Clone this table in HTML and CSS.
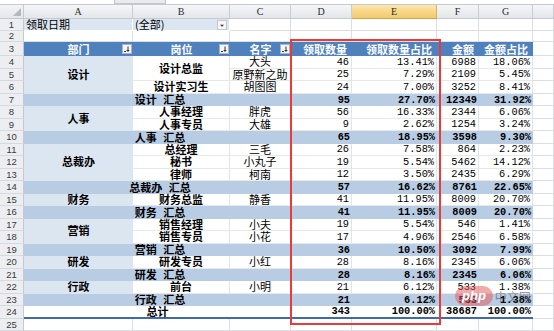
FILE: index.html
```html
<!DOCTYPE html>
<html lang="zh-CN">
<head>
<meta charset="utf-8">
<title>数据透视表</title>
<link rel="stylesheet" href="styles.css">
</head>
<body>
<div class="screen">
  <div class="topbar"><div class="seg"></div></div>
  <div class="sheet">
    <div class="corner"><svg width="8" height="8" viewBox="0 0 8 8"><polygon points="8,0 8,8 0,8" fill="#b4b8be"/></svg></div>
    <div class="ch">A</div><div class="ch">B</div><div class="ch">C</div><div class="ch">D</div><div class="ch sel">E</div><div class="ch">F</div><div class="ch">G</div><div class="ch"></div>

    <div class="rh">1</div>
    <div class="c flt">领取日期</div>
    <div class="c flt">(全部)<span class="dd"><svg width="10" height="10" viewBox="0 0 10 10"><polygon points="2.5,4 7.5,4 5,6.5" fill="#333"/></svg></span></div>
    <div class="c"></div><div class="c"></div><div class="c"></div><div class="c"></div><div class="c"></div><div class="c"></div>

    <div class="rh">2</div>
    <div class="c"></div><div class="c"></div><div class="c"></div><div class="c"></div><div class="c"></div><div class="c"></div><div class="c"></div><div class="c"></div>

    <div class="rh">3</div>
    <div class="h ctr">部门<span class="fb"><svg width="10" height="10" viewBox="0 0 10 10"><rect x="0.5" y="0.5" width="9" height="9" fill="#f4f5f7" stroke="#a9b3c2"/><path d="M6 2.5V7" stroke="#333" stroke-width="1"/><polygon points="4.2,6 7.8,6 6,8" fill="#333"/><path d="M2 7.5H4" stroke="#333" stroke-width="1"/></svg></span></div>
    <div class="h ctr">岗位<span class="fb"><svg width="10" height="10" viewBox="0 0 10 10"><rect x="0.5" y="0.5" width="9" height="9" fill="#f4f5f7" stroke="#a9b3c2"/><path d="M6 2.5V7" stroke="#333" stroke-width="1"/><polygon points="4.2,6 7.8,6 6,8" fill="#333"/><path d="M2 7.5H4" stroke="#333" stroke-width="1"/></svg></span></div>
    <div class="h ctr">名字<span class="fb"><svg width="10" height="10" viewBox="0 0 10 10"><rect x="0.5" y="0.5" width="9" height="9" fill="#f4f5f7" stroke="#a9b3c2"/><path d="M6 2.5V7" stroke="#333" stroke-width="1"/><polygon points="4.2,6 7.8,6 6,8" fill="#333"/><path d="M2 7.5H4" stroke="#333" stroke-width="1"/></svg></span></div>
    <div class="h hr">领取数量</div>
    <div class="h hr">领取数量占比</div>
    <div class="h hr">金额</div>
    <div class="h hr">金额占比</div>
    <div class="c"></div>

    <div class="rh">4</div>
    <div class="dept r3">设计</div>
    <div class="d pos r2">设计总监</div>
    <div class="d ctr">大头</div>
    <div class="d num">46</div><div class="d num">13.41%</div><div class="d num">6988</div><div class="d num">18.06%</div><div class="c"></div>

    <div class="rh">5</div>
    <div class="d ctr">原野新之助</div>
    <div class="d num">25</div><div class="d num">7.29%</div><div class="d num">2109</div><div class="d num">5.45%</div><div class="c"></div>

    <div class="rh">6</div>
    <div class="d pos">设计实习生</div>
    <div class="d ctr">胡图图</div>
    <div class="d num">24</div><div class="d num">7.00%</div><div class="d num">3252</div><div class="d num">8.41%</div><div class="c"></div>

    <div class="rh">7</div>
    <div class="s lbl">设计 汇总</div>
    <div class="s num">95</div><div class="s num">27.70%</div><div class="s num">12349</div><div class="s num">31.92%</div><div class="c"></div>

    <div class="rh">8</div>
    <div class="dept r2">人事</div>
    <div class="d pos">人事经理</div>
    <div class="d ctr">胖虎</div>
    <div class="d num">56</div><div class="d num">16.33%</div><div class="d num">2344</div><div class="d num">6.06%</div><div class="c"></div>

    <div class="rh">9</div>
    <div class="d pos">人事专员</div>
    <div class="d ctr">大雄</div>
    <div class="d num">9</div><div class="d num">2.62%</div><div class="d num">1254</div><div class="d num">3.24%</div><div class="c"></div>

    <div class="rh">10</div>
    <div class="s lbl">人事 汇总</div>
    <div class="s num">65</div><div class="s num">18.95%</div><div class="s num">3598</div><div class="s num">9.30%</div><div class="c"></div>

    <div class="rh">11</div>
    <div class="dept r3">总裁办</div>
    <div class="d pos">总经理</div>
    <div class="d ctr">三毛</div>
    <div class="d num">26</div><div class="d num">7.58%</div><div class="d num">864</div><div class="d num">2.23%</div><div class="c"></div>

    <div class="rh">12</div>
    <div class="d pos">秘书</div>
    <div class="d ctr">小丸子</div>
    <div class="d num">19</div><div class="d num">5.54%</div><div class="d num">5462</div><div class="d num">14.12%</div><div class="c"></div>

    <div class="rh">13</div>
    <div class="d pos">律师</div>
    <div class="d ctr">柯南</div>
    <div class="d num">12</div><div class="d num">3.50%</div><div class="d num">2435</div><div class="d num">6.29%</div><div class="c"></div>

    <div class="rh">14</div>
    <div class="s lbl">总裁办 汇总</div>
    <div class="s num">57</div><div class="s num">16.62%</div><div class="s num">8761</div><div class="s num">22.65%</div><div class="c"></div>

    <div class="rh">15</div>
    <div class="dept">财务</div>
    <div class="d pos">财务总监</div>
    <div class="d ctr">静香</div>
    <div class="d num">41</div><div class="d num">11.95%</div><div class="d num">8009</div><div class="d num">20.70%</div><div class="c"></div>

    <div class="rh">16</div>
    <div class="s lbl">财务 汇总</div>
    <div class="s num">41</div><div class="s num">11.95%</div><div class="s num">8009</div><div class="s num">20.70%</div><div class="c"></div>

    <div class="rh">17</div>
    <div class="dept r2">营销</div>
    <div class="d pos">销售经理</div>
    <div class="d ctr">小夫</div>
    <div class="d num">19</div><div class="d num">5.54%</div><div class="d num">546</div><div class="d num">1.41%</div><div class="c"></div>

    <div class="rh">18</div>
    <div class="d pos">销售专员</div>
    <div class="d ctr">小花</div>
    <div class="d num">17</div><div class="d num">4.96%</div><div class="d num">2546</div><div class="d num">6.58%</div><div class="c"></div>

    <div class="rh">19</div>
    <div class="s lbl">营销 汇总</div>
    <div class="s num">36</div><div class="s num">10.50%</div><div class="s num">3092</div><div class="s num">7.99%</div><div class="c"></div>

    <div class="rh">20</div>
    <div class="dept">研发</div>
    <div class="d pos">研发专员</div>
    <div class="d ctr">小红</div>
    <div class="d num">28</div><div class="d num">8.16%</div><div class="d num">2345</div><div class="d num">6.06%</div><div class="c"></div>

    <div class="rh">21</div>
    <div class="s lbl">研发 汇总</div>
    <div class="s num">28</div><div class="s num">8.16%</div><div class="s num">2345</div><div class="s num">6.06%</div><div class="c"></div>

    <div class="rh">22</div>
    <div class="dept">行政</div>
    <div class="d pos">前台</div>
    <div class="d ctr">小明</div>
    <div class="d num">21</div><div class="d num">6.12%</div><div class="d num">533</div><div class="d num">1.38%</div><div class="c"></div>

    <div class="rh">23</div>
    <div class="s lbl">行政 汇总</div>
    <div class="s num">21</div><div class="s num">6.12%</div><div class="s num">533</div><div class="s num">1.38%</div><div class="c"></div>

    <div class="rh">24</div>
    <div class="t tl">总计</div>
    <div class="t num">343</div><div class="t num">100.00%</div><div class="t num">38687</div><div class="t num">100.00%</div><div class="c"></div>

    <div class="rh">25</div>
    <div class="c"></div><div class="c"></div><div class="c"></div><div class="c"></div><div class="c"></div><div class="c"></div><div class="c"></div><div class="c"></div>
  </div>
  <div class="redbox"></div>
  <div class="wm"><span class="wm-php">php</span><span class="wm-cn">中文网</span></div>
</div>
</body>
</html>
```

FILE: styles.css
```css
html, body {
  margin: 0;
  padding: 0;
  background: #ffffff;
}

.screen {
  position: relative;
  width: 554px;
  height: 331px;
  overflow: hidden;
  font-family: "Noto Sans CJK SC", sans-serif;
  color: #000;
}

.topbar {
  height: 5px;
  box-sizing: border-box;
  border-bottom: 1px solid #c6cad0;
  display: flex;
}

.topbar .seg {
  margin-left: 114px;
  width: 52px;
  height: 4px;
  box-sizing: border-box;
  background: #e9ebee;
  border: 1px solid #c2c6cc;
  border-top: 0;
}

.sheet {
  display: grid;
  grid-template-columns: 24px 109px 97px 61px 61px 85px 42px 54px 21px;
  grid-template-rows: 14px 12px 11px 14px repeat(21, 12.5px) 12.5px;
}

.sheet > div {
  box-sizing: border-box;
  display: flex;
  align-items: center;
  white-space: nowrap;
  min-width: 0;
  position: relative;
  line-height: 1;
}

/* column header */
.corner {
  background: linear-gradient(#f3f4f6, #e4e7eb);
  border-right: 1px solid #c6cad0;
  border-bottom: 1px solid #c6cad0;
  justify-content: flex-end;
  align-items: flex-end !important;
  padding: 0 2px 2px 0;
}

.ch {
  justify-content: center;
  background: linear-gradient(#f5f6f8, #e3e6ea);
  border-right: 1px solid #c9cdd3;
  border-bottom: 1px solid #c6cad0;
  font-family: "Liberation Serif", serif;
  font-size: 10px;
  color: #2b2b2b;
}

.ch.sel {
  background: linear-gradient(#fbe6ab, #f3c969);
  border-right-color: #d7b25c;
  border-bottom-color: #d4a44a;
}

/* row header */
.rh {
  justify-content: center;
  background: #eceef1;
  border-right: 1px solid #c6cad0;
  border-bottom: 1px solid #d6d9de;
  font-family: "Liberation Sans", sans-serif;
  font-size: 9.5px;
  color: #3a3a3a;
}

/* plain cells */
.c {
  border-right: 1px solid #dcdee1;
  border-bottom: 1px solid #dcdee1;
}

.flt {
  background: #dce6f1;
  font-size: 11px;
  padding-left: 2px;
  border-right-color: #ffffff;
  border-bottom-color: #ffffff;
}

.dd {
  position: absolute;
  right: 2px;
  top: 1px;
  width: 10px;
  height: 10px;
  box-sizing: border-box;
  background: #f6f6f6;
  border: 1px solid #c4c8ce;
  display: flex;
  align-items: center;
  justify-content: center;
}

.dd svg {
  width: 9px;
  height: 9px;
}

/* pivot header */
.h {
  background: #4f81bd;
  color: #ffffff;
  font-weight: bold;
  font-size: 11px;
}

.h.ctr {
  justify-content: center;
}

.h.hr {
  justify-content: flex-end;
  padding-right: 5px;
}

.fb {
  position: absolute;
  right: 1px;
  top: 2px;
  width: 10px;
  height: 10px;
  display: flex;
}

/* department column */
.dept {
  background: #dce6f1;
  justify-content: center;
  font-size: 11px;
  font-weight: bold;
  border-bottom: 1px solid #dce6f1;
}

.r2 { grid-row: span 2; }
.r3 { grid-row: span 3; }

/* detail cells */
.d {
  background: #ffffff;
  border-right: 1px solid #e2e4e7;
  border-bottom: 1px solid #e6e8ea;
  font-size: 11px;
}

.d.ctr {
  justify-content: center;
}

.d.pos {
  justify-content: center;
  font-weight: bold;
}

.num {
  justify-content: flex-end;
  padding-right: 2px;
  font-family: "Liberation Mono", monospace;
  font-size: 10.3px !important;
}

/* subtotal rows */
.s {
  background: #b8cce4;
  font-weight: bold;
  font-size: 11px;
}

.s.lbl {
  grid-column: span 3;
  justify-content: center;
  padding-left: 5px;
  word-spacing: 4px;
}

/* total row */
.t {
  background: #ffffff;
  font-weight: bold;
  font-size: 11px;
  border-bottom: 2px solid #3f6ba6;
}

.t.tl {
  grid-column: span 3;
  justify-content: center;
}

/* annotation */
.redbox {
  position: absolute;
  left: 290px;
  top: 39px;
  width: 151px;
  height: 286px;
  box-sizing: border-box;
  border: 2px solid #ea3b3b;
}

.wm {
  position: absolute;
  left: 455px;
  top: 286px;
  display: flex;
  align-items: center;
  gap: 2px;
}

.wm-php {
  background: rgba(232, 86, 86, 0.5);
  color: #ffffff;
  border-radius: 11px;
  padding: 2px 7px 3px;
  font-family: "Liberation Sans", sans-serif;
  font-style: italic;
  font-weight: bold;
  font-size: 13px;
}

.wm-cn {
  color: rgba(70, 70, 70, 0.55);
  font-size: 12px;
}
```
